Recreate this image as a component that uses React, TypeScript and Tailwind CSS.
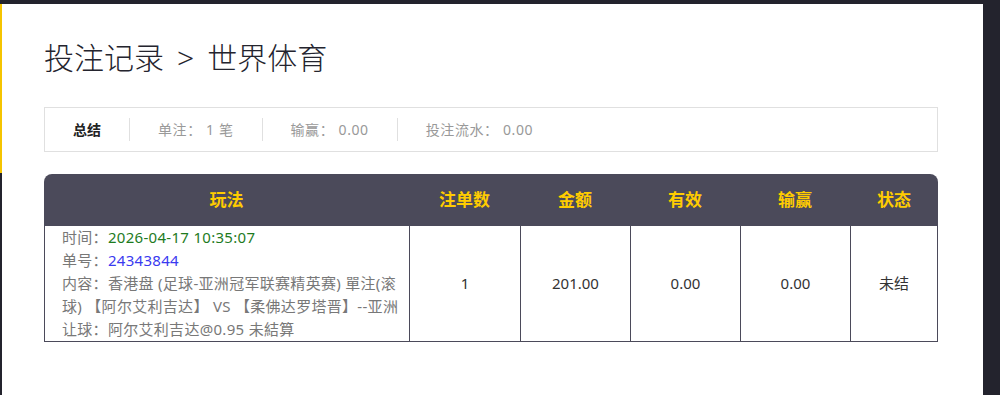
const font = {
  fontFamily: '"Noto Sans", "Noto Sans CJK SC", sans-serif',
};

const summary = [
  { label: "总结", strong: true },
  { label: "单注： 1 笔" },
  { label: "输赢： 0.00" },
  { label: "投注流水： 0.00" },
];

const cols = [
  { title: "玩法", w: "w-[365px]" },
  { title: "注单数", w: "w-[111px]" },
  { title: "金额", w: "w-[110px]" },
  { title: "有效", w: "w-[110px]" },
  { title: "输赢", w: "w-[110px]" },
  { title: "状态", w: "flex-1" },
];

export default function App() {
  return (
    <div
      className="flex h-[395px] bg-[#23232d] pt-[4px] pr-[17px] overflow-hidden"
      style={font}
    >
      {/* left accent */}
      <div className="w-[2px] shrink-0">
        <div className="h-[169px] bg-[#f5c400]" />
      </div>

      <div className="flex-1 bg-white pl-[42px] pr-[45px] pt-[31px]">
        <h1 className="flex text-[30px] leading-[45px] font-light text-[#24242e]">
          投注记录<span className="mx-[13px]">&gt;</span>世界体育
        </h1>

        {/* Summary */}
        <div className="mt-[27px] flex h-[45px] items-center border border-[#e0e0e0]">
          {summary.map((s, i) => (
            <div key={s.label} className="flex items-center">
              {i > 0 && <div className="h-[23px] w-px bg-[#e0e0e0]" />}
              <span
                className={
                  "whitespace-pre px-[28px] text-[14px] " +
                  (s.strong
                    ? "font-bold text-[#222]"
                    : "tracking-[0.6px] text-[#999]")
                }
              >
                {s.label}
              </span>
            </div>
          ))}
        </div>

        {/* Table */}
        <div className="mt-[22px]">
          <div className="flex h-[52px] items-center rounded-t-[8px] bg-[#4b4a5a]">
            {cols.map((c) => (
              <div
                key={c.title}
                className={c.w + " text-center text-[17px] font-bold text-[#ffcc00]"}
              >
                {c.title}
              </div>
            ))}
          </div>
          <div className="flex border-b border-l border-[#4b4a5a] text-[15px] text-[#333]">
            <div className="w-[365px] whitespace-nowrap border-r border-[#4b4a5a] pl-[17px] leading-[23px] tracking-[0.3px] text-[#787878]">
              <div>
                时间：<span className="text-[#1e7b1e]">2026-04-17 10:35:07</span>
              </div>
              <div>
                单号：<span className="text-[#3a3af0]">24343844</span>
              </div>
              <div>内容：香港盘 (足球-亚洲冠军联赛精英赛) 單注(滚</div>
              <div>球) 【阿尔艾利吉达】 VS 【柔佛达罗塔晋】--亚洲</div>
              <div>让球：阿尔艾利吉达@0.95 未結算</div>
            </div>
            <div className="flex w-[111px] items-center justify-center border-r border-[#4b4a5a]">
              1
            </div>
            <div className="flex w-[110px] items-center justify-center border-r border-[#4b4a5a]">
              201.00
            </div>
            <div className="flex w-[110px] items-center justify-center border-r border-[#4b4a5a]">
              0.00
            </div>
            <div className="flex w-[110px] items-center justify-center border-r border-[#4b4a5a]">
              0.00
            </div>
            <div className="flex flex-1 items-center justify-center border-r border-[#4b4a5a]">
              未结
            </div>
          </div>
        </div>
      </div>
    </div>
  );
}
